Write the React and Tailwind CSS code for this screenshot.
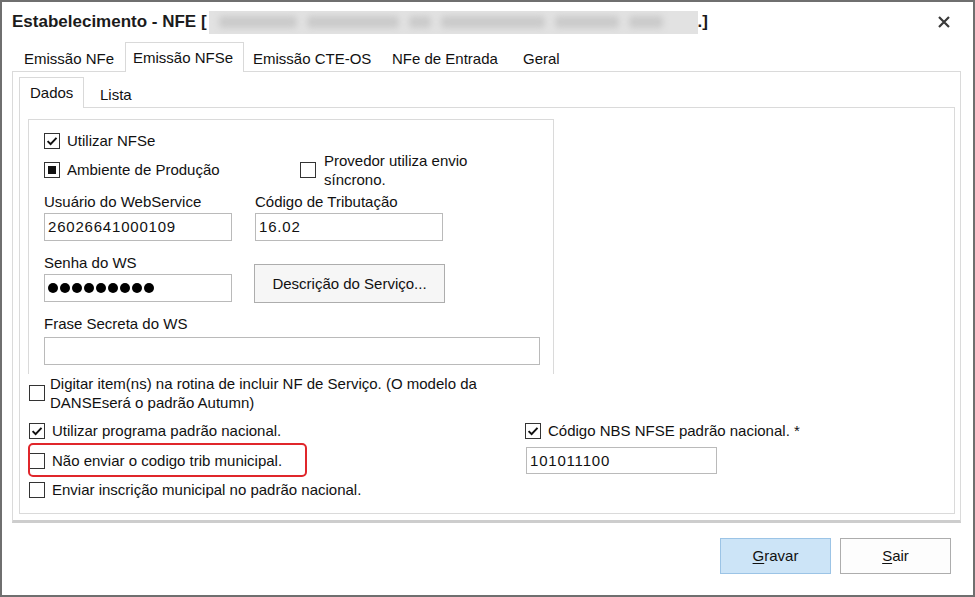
import React from "react";

function Box({ checked, mixed }) {
  return (
    <span className="flex h-[16px] w-[16px] shrink-0 items-center justify-center border border-[#333] bg-white">
      {checked && (
        <svg width="12" height="12" viewBox="0 0 12 12" fill="none">
          <path d="M1.6 6.1 4.6 9.1 10.5 2.9" stroke="#111" strokeWidth="2" />
        </svg>
      )}
      {mixed && <span className="h-[8px] w-[8px] bg-[#111]" />}
    </span>
  );
}

function Check({ checked, mixed, children, className = "" }) {
  return (
    <div className={`flex h-[18px] items-center gap-[7px] whitespace-nowrap ${className}`}>
      <Box checked={checked} mixed={mixed} />
      <span>{children}</span>
    </div>
  );
}

function Field({ children, className = "" }) {
  return (
    <div className={`flex items-center border border-[#bababa] bg-white px-[3px] tracking-[0.8px] ${className}`}>
      {children}
    </div>
  );
}

// the company name is blurred out in the original capture
function Blurred() {
  const words = [78, 92, 22, 104, 64, 34];
  return (
    <div className="ml-[2px] flex h-[23px] w-[489px] items-center gap-[10px] overflow-hidden bg-[#e2e2e2] px-[10px]">
      {words.map((w, i) => (
        <span key={i} className="h-[12px] shrink-0 rounded-sm bg-[#cacaca] blur-[3px]" style={{ width: w }} />
      ))}
    </div>
  );
}

export default function App() {
  return (
    <div className="h-[597px] w-[975px] overflow-hidden bg-white font-['Liberation_Sans',Arial,sans-serif] text-[15px] leading-[18px] text-[#111]">
      <div className="flex h-full flex-col border-2 border-[#6f6f6f]">
        {/* title bar */}
        <div className="flex h-[40px] shrink-0 items-center pl-[10px] pr-[23px]">
          <span className="text-[17px] font-bold text-[#1b1b1b]">Estabelecimento - NFE [</span>
          <Blurred />
          <span className="text-[17px] font-bold text-[#1b1b1b]">.]</span>
          <button type="button" className="ml-auto" aria-label="Fechar">
            <svg width="12" height="12" viewBox="0 0 12 12">
              <path d="M1 1 11 11M11 1 1 11" stroke="#3a3a3a" strokeWidth="2.2" />
            </svg>
          </button>
        </div>

        {/* main tabs */}
        <div className="relative z-10 -mb-px flex h-[30px] shrink-0 pl-[12px]">
          <div className="flex w-[111px] items-center pl-[10px] pt-[4px]">Emissão NFe</div>
          <div className="flex w-[119px] items-center border-l border-r border-t border-[#d9d9d9] bg-white pl-[7px]">
            Emissão NFSe
          </div>
          <div className="flex w-[139px] items-center pl-[9px] pt-[4px]">Emissão CTE-OS</div>
          <div className="flex w-[131px] items-center pl-[9px] pt-[4px]">NFe de Entrada</div>
          <div className="flex w-[56px] items-center pl-[9px] pt-[4px]">Geral</div>
        </div>

        <div className="ml-[10px] mr-[12px] flex h-[452px] shrink-0 flex-col border border-b-[3px] border-[#dadada] border-b-[#cdcdcd]">
          {/* inner tabs */}
          <div className="relative z-10 -mb-px ml-[6px] mt-[5px] flex h-[31px] shrink-0">
            <div className="flex w-[65px] items-center border-l border-r border-t border-[#d9d9d9] bg-white pb-[1px] pl-[10px]">
              Dados
            </div>
            <div className="flex items-center pl-[16px] pt-[4px]">Lista</div>
          </div>

          <div className="ml-[6px] mr-[5px] flex h-[407px] shrink-0 flex-col border border-[#dadada]">
            {/* group box */}
            <div className="ml-[8px] mt-[11px] h-[255px] w-[526px] shrink-0 border-l border-r border-t border-[#dadada] pl-[15px]">
              <Check checked className="mt-[12px]">Utilizar NFSe</Check>

              <div className="mt-[1px] grid h-[38px] grid-cols-[211px_1fr] items-center">
                <Check mixed>Ambiente de Produção</Check>
                <div className="flex items-center gap-[8px] pl-[45px] leading-[19px]">
                  <Box />
                  <span>
                    Provedor utiliza envio
                    <br />
                    síncrono.
                  </span>
                </div>
              </div>

              <div className="mt-[4px] grid grid-cols-[211px_1fr]">
                <span>Usuário do WebService</span>
                <span>Código de Tributação</span>
              </div>
              <div className="mt-[2px] grid grid-cols-[211px_1fr]">
                <Field className="h-[28px] w-[188px]">26026641000109</Field>
                <Field className="h-[28px] w-[188px]">16.02</Field>
              </div>

              <div className="mt-[13px] grid grid-cols-[211px_1fr]">
                <div>
                  <div>Senha do WS</div>
                  <div className="mt-[2px] flex h-[28px] w-[188px] items-center gap-[2px] border border-[#bababa] bg-white px-[3px]">
                    {Array.from({ length: 9 }).map((_, i) => (
                      <span key={i} className="h-[10px] w-[10px] rounded-full bg-black" />
                    ))}
                  </div>
                </div>
                <div>
                  <button
                    type="button"
                    className="-ml-px mt-[10px] h-[39px] w-[191px] border border-[#adadad] bg-[#f6f6f6] text-center"
                  >
                    Descrição do Serviço...
                  </button>
                </div>
              </div>

              <div className="mt-[12px]">Frase Secreta do WS</div>
              <Field className="mt-[4px] h-[28px] w-[496px]" />
            </div>

            {/* options */}
            <div className="flex h-[37px] shrink-0 items-center gap-[5px] pl-[9px]">
              <Box />
              <span className="h-[37px] overflow-hidden leading-[19px]">
                Digitar item(ns) na rotina de incluir NF de Serviço. (O modelo da
                <br />
                DANSEserá o padrão Autumn)
              </span>
            </div>

            <div className="mt-[11px] flex pl-[9px]">
              <div className="relative w-[496px]">
                <Check checked>Utilizar programa padrão nacional.</Check>
                <Check className="mt-[12px]">Não enviar o codigo trib municipal.</Check>
                <Check className="mt-[11px]">Enviar inscrição municipal no padrão nacional.</Check>
                <div className="pointer-events-none absolute left-[-1px] top-[21px] h-[34px] w-[279px] rounded-[5px] border-2 border-[#e0262b]" />
              </div>
              <div>
                <Check checked>Código NBS NFSE padrão nacional. *</Check>
                <Field className="ml-px mt-[7px] h-[27px] w-[191px]">101011100</Field>
              </div>
            </div>
          </div>
        </div>

        {/* footer */}
        <div className="mt-[15px] flex justify-end gap-[9px] pr-[22px]">
          <button type="button" className="h-[36px] w-[111px] border border-[#9cc4e6] bg-[#cce4f7]">
            <span className="underline underline-offset-2">G</span>ravar
          </button>
          <button type="button" className="h-[36px] w-[111px] border border-[#adadad] bg-[#fdfdfd]">
            <span className="underline underline-offset-2">S</span>air
          </button>
        </div>
      </div>
    </div>
  );
}
